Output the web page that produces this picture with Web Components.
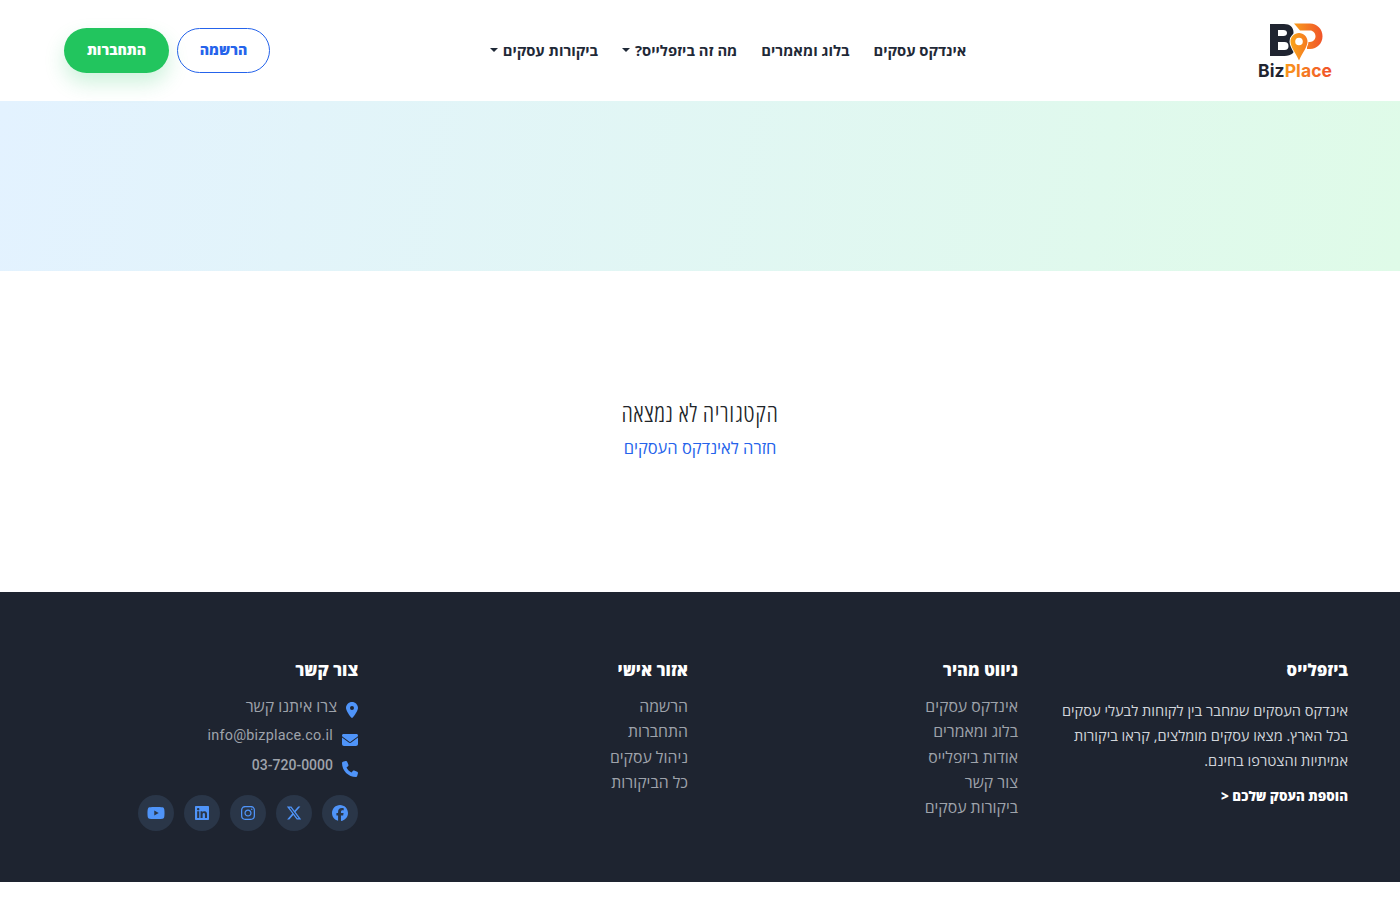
<!DOCTYPE html>
<html lang="he" dir="rtl">
<head>
<meta charset="utf-8">
<title>BizPlace</title>
<style>
    html, body { margin: 0; padding: 0; background: #fff; }
    body { font-family: "Open Sans", Roboto, sans-serif; }
</style>
</head>
<body>
<site-header></site-header>
<hero-band></hero-band>
<not-found></not-found>
<site-footer></site-footer>

<script>
// shared icon paths (viewBox, d)
const ICONS = {
    pin: ['0 0 384 512', 'M215.7 499.2C267 435 384 279.4 384 192C384 86 298 0 192 0S0 86 0 192c0 87.4 117 243 168.3 307.2c12.3 15.3 35.1 15.3 47.4 0zM192 128a64 64 0 1 1 0 128 64 64 0 1 1 0-128z'],
    mail: ['0 0 512 512', 'M48 64C21.5 64 0 85.5 0 112c0 15.1 7.1 29.3 19.2 38.4L236.8 313.6c11.4 8.5 27 8.5 38.4 0L492.8 150.4c12.1-9.1 19.2-23.3 19.2-38.4c0-26.5-21.5-48-48-48H48zM0 176V384c0 35.3 28.7 64 64 64H448c35.3 0 64-28.7 64-64V176L294.4 339.2c-22.8 17.1-54 17.1-76.8 0L0 176z'],
    phone: ['0 0 512 512', 'M164.9 24.6c-7.7-18.6-28-28.5-47.4-23.2l-88 24C12.1 30.2 0 46 0 64C0 311.4 200.6 512 448 512c18 0 33.8-12.1 38.6-29.5l24-88c5.3-19.4-4.6-39.7-23.2-47.4l-96-40c-16.3-6.8-35.2-2.1-46.3 11.6L304.7 368C234.3 334.7 177.3 277.7 144 207.3L193.3 167c13.7-11.2 18.4-30 11.6-46.3l-40-96z'],
    facebook: ['0 0 512 512', 'M512 256C512 114.6 397.4 0 256 0S0 114.6 0 256C0 376 82.7 476.8 194.2 504.5V334.2H141.4V256h52.8V222.3c0-87.1 39.4-127.5 125-127.5c16.2 0 44.2 3.2 55.7 6.4V172c-6-.6-16.5-1-29.6-1c-42 0-58.2 15.9-58.2 57.2V256h83.6l-14.4 78.2H287V510.1C413.8 494.8 512 386.9 512 256h0z'],
    x: ['0 0 512 512', 'M389.2 48h70.6L305.6 224.2 487 464H345L233.7 318.6 106.5 464H35.8L200.7 275.5 26.8 48H172.4L272.9 180.9 389.2 48zM364.4 421.8h39.1L151.1 88h-42L364.4 421.8z'],
    instagram: ['0 0 448 512', 'M224.1 141c-63.6 0-114.9 51.3-114.9 114.9s51.3 114.9 114.9 114.9S339 319.5 339 255.9 287.7 141 224.1 141zm0 189.6c-41.1 0-74.7-33.5-74.7-74.7s33.5-74.7 74.7-74.7 74.7 33.5 74.7 74.7-33.6 74.7-74.7 74.7zm146.4-194.3c0 14.9-12 26.8-26.8 26.8-14.9 0-26.8-12-26.8-26.8s12-26.8 26.8-26.8 26.8 12 26.8 26.8zm76.1 27.2c-1.7-35.9-9.9-67.7-36.2-93.9-26.2-26.2-58-34.4-93.9-36.2-37-2.1-147.9-2.1-184.9 0-35.8 1.7-67.6 9.9-93.9 36.1s-34.4 58-36.2 93.9c-2.1 37-2.1 147.9 0 184.9 1.7 35.9 9.9 67.7 36.2 93.9s58 34.4 93.9 36.2c37 2.1 147.9 2.1 184.9 0 35.9-1.7 67.7-9.9 93.9-36.2 26.2-26.2 34.4-58 36.2-93.9 2.1-37 2.1-147.8 0-184.8zM398.8 388c-7.8 19.6-22.9 34.7-42.6 42.6-29.5 11.7-99.5 9-132.1 9s-102.7 2.6-132.1-9c-19.6-7.8-34.7-22.9-42.6-42.6-11.7-29.5-9-99.5-9-132.1s-2.6-102.7 9-132.1c7.8-19.6 22.9-34.7 42.6-42.6 29.5-11.7 99.5-9 132.1-9s102.7-2.6 132.1 9c19.6 7.8 34.7 22.9 42.6 42.6 11.7 29.5 9 99.5 9 132.1s2.7 102.7-9 132.1z'],
    linkedin: ['0 0 448 512', 'M416 32H31.9C14.3 32 0 46.5 0 64.3v383.4C0 465.5 14.3 480 31.9 480H416c17.6 0 32-14.5 32-32.3V64.3c0-17.8-14.4-32.3-32-32.3zM135.4 416H69V202.2h66.5V416zm-33.2-243c-21.3 0-38.5-17.3-38.5-38.5S80.9 96 102.2 96c21.2 0 38.5 17.3 38.5 38.5 0 21.3-17.2 38.5-38.5 38.5zm282.1 243h-66.4V312c0-24.8-.5-56.7-34.5-56.7-34.6 0-39.9 27-39.9 54.9V416h-66.4V202.2h63.7v29.2h.9c8.9-16.8 30.6-34.5 62.9-34.5 67.2 0 79.7 44.3 79.7 101.9V416z'],
    youtube: ['0 0 576 512', 'M549.655 124.083c-6.281-23.65-24.787-42.276-48.284-48.597C458.781 64 288 64 288 64S117.22 64 74.629 75.486c-23.497 6.322-42.003 24.947-48.284 48.597-11.412 42.867-11.412 132.305-11.412 132.305s0 89.438 11.412 132.305c6.281 23.65 24.787 41.5 48.284 47.821C117.22 448 288 448 288 448s170.78 0 213.371-11.486c23.497-6.321 42.003-24.171 48.284-47.821 11.412-42.867 11.412-132.305 11.412-132.305s0-89.438-11.412-132.305zm-317.51 213.508V175.185l142.739 81.205-142.739 81.201z']
};

const icon = (name, h) => {
    const [box, d] = ICONS[name];
    return `<svg viewBox="${box}" height="${h}" fill="currentColor" aria-hidden="true"><path d="${d}"/></svg>`;
};

class SiteHeader extends HTMLElement {
    constructor() {
        super();
        this.attachShadow({ mode: 'open' });
        this.shadowRoot.innerHTML = `
            <style>
                :host {
                    display: block;
                    height: 101px;
                    background: #fff;
                }
                .bar {
                    height: 100%;
                    box-sizing: border-box;
                    padding: 0 64px 1px 64px;
                    display: flex;
                    align-items: center;
                    justify-content: space-between;
                }
                .logo { width: 150px; display: flex; justify-content: flex-start; }
                nav {
                    display: flex;
                    align-items: center;
                    gap: 24px;
                    padding-bottom: 1px;
                    font-size: 14.8px;
                    font-weight: 700;
                    color: #1f2937;
                }
                nav a { display: flex; align-items: center; gap: 5px; white-space: nowrap; }
                nav a.drop::after {
                    content: '';
                    border-top: 4px solid #1f2937;
                    border-left: 4px solid transparent;
                    border-right: 4px solid transparent;
                }
                .actions { display: flex; gap: 8px; }
                .btn {
                    box-sizing: border-box;
                    height: 45px;
                    padding-bottom: 2px;
                    border-radius: 23px;
                    display: flex;
                    align-items: center;
                    justify-content: center;
                    font-size: 14.2px;
                    font-weight: 800;
                }
                .register { width: 93px; border: 1px solid #2563eb; color: #2563eb; }
                .login {
                    width: 105px;
                    background: #22c55e;
                    color: #fff;
                    box-shadow: 0 10px 20px rgba(34, 197, 94, .22);
                }
                text { font-family: Inter, "Liberation Sans", sans-serif; font-weight: 700; font-size: 17.5px; }
            </style>
            <div class="bar">
                <div class="logo">
                    <svg width="78" height="58" viewBox="0 0 78 58" aria-label="BizPlace">
                        <defs>
                            <linearGradient id="o" gradientUnits="userSpaceOnUse" x1="34" x2="66" y1="0" y2="0">
                                <stop offset="0" stop-color="#f9a11b"/>
                                <stop offset="1" stop-color="#f0502a"/>
                            </linearGradient>
                            <linearGradient id="t" gradientUnits="userSpaceOnUse" x1="28" x2="74" y1="0" y2="0">
                                <stop offset="0" stop-color="#f9961d"/>
                                <stop offset="1" stop-color="#f0502a"/>
                            </linearGradient>
                        </defs>
                        <path fill-rule="evenodd" d="M12 3h14c6 0 9.500 3.500 9.500 8.200 0 2.800-1.300 5-3.500 6.300 3.500 1.300 5.500 4.200 5.500 8 0 5.700-4.200 9.500-11 9.500H12zM20 9v6h5.500c2.200 0 3.500-1.100 3.500-3s-1.300-3-3.500-3zM20 21v8h6.500c2.700 0 4-1.500 4-4s-1.300-4-4-4z" fill="#1f2430"/>
                        <path d="M36 2.500h16c7 0 12.500 5.500 12.500 12.800S59 28 52 28h-3v-7h3c3 0 5.500-2.500 5.500-5.700S55 9.500 52 9.500H42z" fill="url(#o)"/>
                        <path fill-rule="evenodd" d="M41 12c4.700 0 8.500 3.800 8.500 8.500 0 5.500-4.800 10.500-8.500 19-3.700-8.500-8.500-13.500-8.500-19 0-4.700 3.800-8.500 8.500-8.500zm0 4.700a3.800 3.800 0 1 0 0 7.600 3.800 3.800 0 0 0 0-7.600z" fill="url(#o)" stroke="#fff" stroke-width="2" paint-order="stroke"/>
                        <text x="0" y="55.500" direction="ltr" textLength="74"><tspan fill="#1f2430">Biz</tspan><tspan fill="url(#t)">Place</tspan></text>
                    </svg>
                </div>
                <nav>
                    <a>אינדקס עסקים</a>
                    <a>בלוג ומאמרים</a>
                    <a class="drop">מה זה ביזפלייס?</a>
                    <a class="drop">ביקורות עסקים</a>
                </nav>
                <div class="actions">
                    <a class="btn register">הרשמה</a>
                    <a class="btn login">התחברות</a>
                </div>
            </div>
        `;
    }
}

class HeroBand extends HTMLElement {
    constructor() {
        super();
        this.attachShadow({ mode: 'open' });
        this.shadowRoot.innerHTML = `
            <style>
                :host {
                    display: block;
                    height: 170px;
                    background: linear-gradient(100deg, #e3f2ff 0%, #dffbe8 100%);
                }
            </style>
        `;
    }
}

class NotFound extends HTMLElement {
    constructor() {
        super();
        this.attachShadow({ mode: 'open' });
        this.shadowRoot.innerHTML = `
            <style>
                :host {
                    display: flex;
                    flex-direction: column;
                    align-items: center;
                    height: 321px;
                    box-sizing: border-box;
                    padding-top: 125px;
                }
                h2 { margin: 0; font-size: 25px; font-weight: 300; font-stretch: 75%; letter-spacing: .6px; line-height: 32px; color: #212529; }
                a { margin-top: 8px; font-size: 16.5px; line-height: 24px; color: #2563eb; }
            </style>
            <h2>הקטגוריה לא נמצאה</h2>
            <a>חזרה לאינדקס העסקים</a>
        `;
    }
}

class FooterCol extends HTMLElement {
    constructor() {
        super();
        this.attachShadow({ mode: 'open' });
        this.shadowRoot.innerHTML = `
            <style>
                :host { display: block; padding: 0 12px; }
                h3 {
                    margin: 0 0 12px;
                    font-size: 16.6px;
                    line-height: 24px;
                    font-weight: 800;
                    color: #fff;
                }
            </style>
            <h3>${this.getAttribute('heading') || ''}</h3>
            <slot></slot>
        `;
    }
}

class LinkList extends HTMLElement {
    constructor() {
        super();
        this.attachShadow({ mode: 'open' });
        const items = (this.getAttribute('items') || '').split('|');
        this.shadowRoot.innerHTML = `
            <style>
                :host { display: block; }
                a { display: block; font-size: 15.8px; line-height: 25.3px; color: #9ea3ab; }
            </style>
            ${items.map(t => `<a>${t}</a>`).join('')}
        `;
    }
}

class ContactList extends HTMLElement {
    constructor() {
        super();
        this.attachShadow({ mode: 'open' });
        this.shadowRoot.innerHTML = `
            <style>
                :host { display: block; color: #9ea3ab; font-size: 15.8px; padding-top: 2px; }
                .row { display: flex; align-items: flex-start; gap: 9px; height: 29.7px; }
                .row span { line-height: 20px; }
                .row span[dir] { font-family: Roboto, sans-serif; font-size: 14.4px; letter-spacing: .22px; }
                .row span[dir].tel { font-size: 14px; font-weight: 500; letter-spacing: 0; }
                svg { color: #4f94f9; flex: none; margin-top: 6px; }
                .social { display: flex; gap: 10px; margin-top: 10px; }
                .social a {
                    width: 36px;
                    height: 36px;
                    border-radius: 50%;
                    background: #2a3648;
                    color: #4f94f9;
                    display: flex;
                    align-items: center;
                    justify-content: center;
                }
                .social svg { margin: 0; }
            </style>
            <div class="row">${icon('pin', 16)}<span>צרו איתנו קשר</span></div>
            <div class="row">${icon('mail', 16)}<span dir="ltr">info@bizplace.co.il</span></div>
            <div class="row">${icon('phone', 16)}<span dir="ltr" class="tel">03-720-0000</span></div>
            <div class="social">
                <a>${icon('facebook', 16)}</a>
                <a>${icon('x', 16)}</a>
                <a>${icon('instagram', 16)}</a>
                <a>${icon('linkedin', 16)}</a>
                <a>${icon('youtube', 16)}</a>
            </div>
        `;
    }
}

class SiteFooter extends HTMLElement {
    constructor() {
        super();
        this.attachShadow({ mode: 'open' });
        this.shadowRoot.innerHTML = `
            <style>
                :host {
                    display: block;
                    height: 290px;
                    box-sizing: border-box;
                    background: #1e2430;
                    padding-top: 66px;
                }
                .row {
                    width: 1320px;
                    margin: 0 auto;
                    display: grid;
                    grid-template-columns: repeat(4, 330px);
                }
                p { margin: 0 0 10px; padding-top: 4px; font-size: 14.6px; line-height: 25.2px; color: #d1d5db; }
                a.add { font-size: 13.4px; font-weight: 800; color: #fff; }
            </style>
            <div class="row">
                <footer-col heading="ביזפלייס">
                    <p>אינדקס העסקים שמחבר בין לקוחות לבעלי עסקים בכל הארץ. מצאו עסקים מומלצים, קראו ביקורות אמיתיות והצטרפו בחינם.</p>
                    <a class="add">הוספת העסק שלכם &lt;</a>
                </footer-col>
                <footer-col heading="ניווט מהיר">
                    <link-list items="אינדקס עסקים|בלוג ומאמרים|אודות ביזפלייס|צור קשר|ביקורות עסקים"></link-list>
                </footer-col>
                <footer-col heading="אזור אישי">
                    <link-list items="הרשמה|התחברות|ניהול עסקים|כל הביקורות"></link-list>
                </footer-col>
                <footer-col heading="צור קשר">
                    <contact-list></contact-list>
                </footer-col>
            </div>
        `;
    }
}

customElements.define('footer-col', FooterCol);
customElements.define('link-list', LinkList);
customElements.define('contact-list', ContactList);
customElements.define('site-header', SiteHeader);
customElements.define('hero-band', HeroBand);
customElements.define('not-found', NotFound);
customElements.define('site-footer', SiteFooter);
</script>
</body>
</html>
